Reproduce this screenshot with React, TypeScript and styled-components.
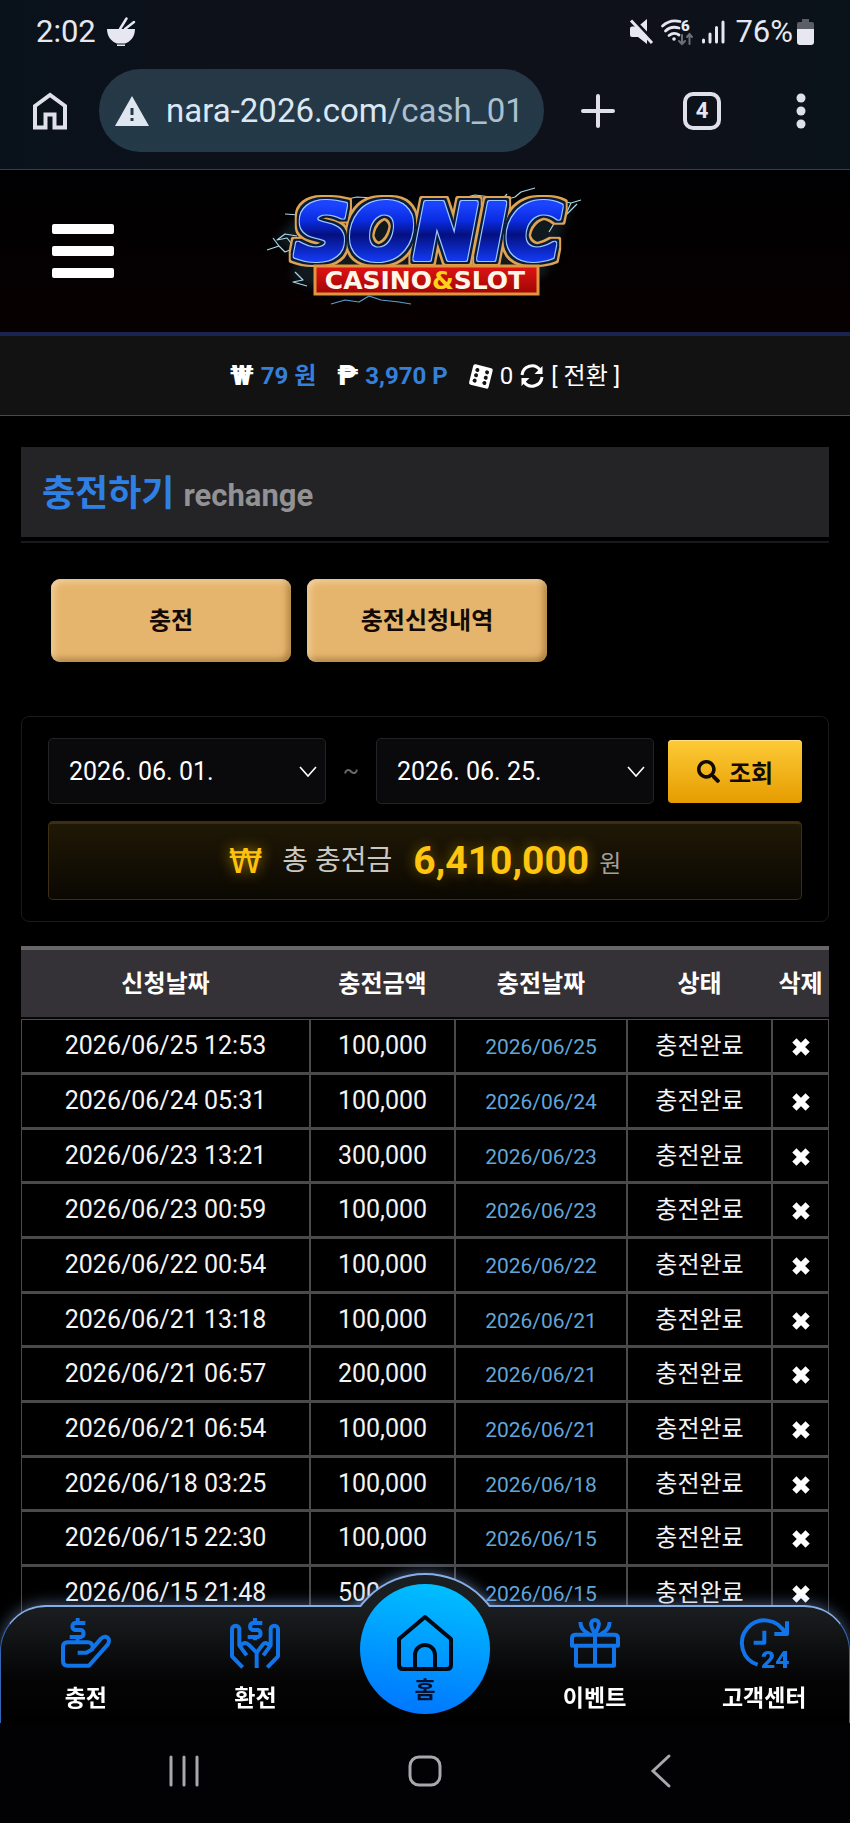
import React from 'react';
import styled, { createGlobalStyle } from 'styled-components';
import { FaSearch } from 'react-icons/fa';

const ROBOTO = `Roboto, "Noto Sans CJK KR", sans-serif`;

const GlobalStyle = createGlobalStyle`
  * { box-sizing: border-box; }
  body { margin: 0; background: #000; color: #fff; font-family: ${ROBOTO}; }
  button { border: 0; padding: 0; margin: 0; background: none; color: inherit; font: inherit; cursor: pointer; }
  a { color: inherit; text-decoration: none; }
  svg { display: block; flex: none; overflow: visible; }
`;

const Page = styled.div`
  padding-bottom: 202px;
`;

/* ---------- phone status bar and browser toolbar ---------- */

const Chrome = styled.div`
  background: linear-gradient(90deg, #09121a 0%, #0e111a 30%, #0e111a 80%, #0a131a 100%);
  border-bottom: 1px solid #3b3d42;
  color: #e6e7f0;
`;

const StatusBar = styled.div`
  display: flex;
  align-items: center;
  height: 64px;
  padding: 0 36px;
  font-size: 31px;
  line-height: 36px;
`;

const StatusGroup = styled.div`
  display: flex;
  align-items: center;
  gap: 10px;
`;

const StatusRight = styled(StatusGroup)`
  gap: 8px;
  margin-left: auto;
`;

const BatteryGroup = styled(StatusGroup)`
  gap: 4px;
  margin-left: 2px;
`;

const Toolbar = styled.div`
  display: flex;
  align-items: center;
  height: 105px;
  padding: 0 0 12px;
`;

const ToolButton = styled.button<{ $width: number }>`
  display: flex;
  align-items: center;
  justify-content: center;
  width: ${(p) => p.$width}px;
  height: 84px;
`;

const Address = styled.button`
  display: flex;
  align-items: center;
  gap: 17px;
  flex: 1;
  min-width: 0;
  height: 83px;
  padding: 0 16px;
  border-radius: 42px;
  background: linear-gradient(#273746, #233a48);
  color: #dbe7f3;
  font-size: 33px;
  line-height: 40px;
  white-space: nowrap;
  overflow: hidden;
`;

const AddressPath = styled.span`
  color: #adc0d0;
`;

const TabCount = styled.span`
  display: flex;
  align-items: center;
  justify-content: center;
  width: 38px;
  height: 38px;
  border: 4px solid #dfe0ea;
  border-radius: 10px;
  font-size: 22px;
  font-weight: 700;
  line-height: 24px;
`;

/* ---------- site header ---------- */

const SiteHeader = styled.header`
  display: grid;
  grid-template-columns: 1fr auto 1fr;
  align-items: center;
  height: 166px;
  padding: 0 52px;
  background: linear-gradient(#000002, #080001);
  border-bottom: 4px solid #1b2350;
`;

const MenuButton = styled.button`
  display: grid;
  gap: 12px;
  width: 62px;
`;

const MenuBar = styled.span`
  height: 10px;
  border-radius: 2px;
  background: #fff;
`;

const LogoLink = styled.a`
  display: block;
`;

const Wallet = styled.div`
  display: flex;
  align-items: center;
  justify-content: center;
  height: 80px;
  background: #121213;
  border-bottom: 1px solid #4a4a4c;
  font-size: 24px;
  line-height: 32px;
`;

const WalletItem = styled.div`
  display: flex;
  align-items: center;
  gap: 7px;
  & + & { margin-left: 21px; }
`;

const Sign = styled.span`
  font-size: 28px;
  font-weight: 900;
`;

const Amount = styled.strong`
  color: #3580dc;
  font-weight: 700;
`;

/* ---------- page content ---------- */

const Main = styled.main`
  padding: 31px 21px 0;
`;

const TitleBar = styled.div`
  display: flex;
  align-items: baseline;
  gap: 9px;
  height: 90px;
  padding: 22px 21px 0;
  background: #242326;
`;

const Title = styled.h1`
  margin: 0;
  color: #2f80e4;
  font-size: 36px;
  font-weight: 700;
  line-height: 50px;
`;

const Subtitle = styled.span`
  color: #929193;
  font-size: 31px;
  font-weight: 700;
  line-height: 40px;
`;

const Rule = styled.hr`
  margin: 4px 0 0;
  border: 0;
  border-top: 2px solid #19191b;
`;

const Tabs = styled.div`
  display: flex;
  gap: 16px;
  padding: 36px 30px 0;
`;

const TabButton = styled.button`
  width: 240px;
  height: 83px;
  border-radius: 9px;
  background: #e6b56d;
  box-shadow: inset 3px 3px 6px rgba(255, 240, 210, 0.5), inset -3px -3px 6px rgba(110, 70, 10, 0.5);
  color: #140a04;
  font-size: 24px;
  font-weight: 700;
  line-height: 32px;
`;

const Panel = styled.section`
  margin-top: 54px;
  padding: 21px 26px;
  border: 1px solid #1a1a1c;
  border-radius: 8px;
`;

const Filter = styled.form`
  display: flex;
  align-items: center;
`;

const DateField = styled.label`
  position: relative;
  flex: 1;
  min-width: 0;
`;

const DateSelect = styled.select`
  display: block;
  width: 100%;
  height: 66px;
  padding: 0 48px 0 20px;
  appearance: none;
  border: 1px solid #232326;
  border-radius: 5px;
  background: #0a090c;
  color: #fff;
  font-family: ${ROBOTO};
  font-size: 25px;
`;

const Chevron = styled.svg`
  position: absolute;
  top: 28px;
  right: 9px;
  pointer-events: none;
`;

const Tilde = styled.span`
  width: 50px;
  color: #6a6a6c;
  font-size: 24px;
  text-align: center;
`;

const SearchButton = styled.button`
  display: flex;
  align-items: center;
  justify-content: center;
  gap: 9px;
  width: 134px;
  height: 63px;
  margin-left: 14px;
  border-radius: 4px;
  background: linear-gradient(#fdcb38, #e69c00);
  box-shadow: inset 0 1px 0 #ffe07a;
  color: #120b02;
  font-size: 24px;
  font-weight: 700;
`;

const Total = styled.div`
  display: flex;
  align-items: center;
  justify-content: center;
  height: 79px;
  margin-top: 17px;
  padding-bottom: 2px;
  border: 1px solid #3e2f10;
  border-top: 3px solid #3c2e10;
  border-radius: 5px;
  background: linear-gradient(#1f1806, #0b0802);
  color: #c9c7c3;
  font-size: 28px;
  line-height: 40px;
`;

const TotalSign = styled.span`
  margin-right: 20px;
  color: #ffc20a;
  font-family: "DejaVu Sans", sans-serif;
  font-size: 34px;
  text-shadow: 0 0 14px rgba(255, 190, 0, 0.6);
`;

const TotalValue = styled.strong`
  margin: 0 10px 0 21px;
  color: #ffc50f;
  font-size: 39px;
  font-weight: 700;
  text-shadow: 0 0 14px rgba(255, 190, 0, 0.4);
`;

const TotalUnit = styled.span`
  padding-top: 6px;
  color: #a3a09a;
  font-size: 24px;
`;

const History = styled.table`
  width: 100%;
  margin-top: 24px;
  table-layout: fixed;
  border-collapse: separate;
  border-spacing: 0;
  text-align: center;
`;

/* shares are parts of the 808 that the five columns add up to */
const Col = styled.col<{ $share: number }>`
  width: ${(p) => (p.$share / 808) * 100}%;
`;

const HeadCell = styled.th`
  height: 73px;
  padding: 0 0 4px;
  border-top: 4px solid #676769;
  border-bottom: 2px solid #060607;
  background: #343236;
  font-size: 24px;
  font-weight: 700;
  white-space: nowrap;
`;

const Row = styled.tr`
  height: 55px;
  &:nth-child(3n) { height: 54px; }
`;

const Cell = styled.td<{ $size?: number; $color?: string }>`
  padding: 0;
  border: 1px solid #4a4a4d;
  border-bottom-width: 2px;
  color: ${(p) => p.$color ?? '#f4f4f5'};
  font-size: ${(p) => p.$size ?? 25}px;
  line-height: 32px;
  white-space: nowrap;
`;

const LowCell = styled(Cell)`
  padding-top: 2px;
`;

const DeleteButton = styled.button`
  display: block;
  margin: 0 auto;
`;

/* ---------- dock over the page ---------- */

const Dock = styled.div`
  position: fixed;
  left: 0;
  right: 0;
  bottom: 0;
`;

const SiteNav = styled.nav`
  position: relative;
  display: grid;
  grid-template-columns: repeat(5, 1fr);
  height: 118px;
  border: 1px solid #3466b8;
  border-top: 2px solid #88aee8;
  border-bottom: 0;
  border-radius: 46px 46px 0 0;
  background: linear-gradient(#1b1e21, #050506 60%, #000);
  box-shadow: 0 -2px 14px rgba(130, 165, 220, 0.45);
`;

const Bump = styled.span`
  position: absolute;
  left: 50%;
  top: -34px;
  width: 164px;
  height: 164px;
  margin-left: -82px;
  border: 2px solid #88aee8;
  border-radius: 50%;
  background: #1b1e21;
  box-shadow: 0 0 14px rgba(130, 165, 220, 0.6);
  clip-path: inset(-20px -20px 130px -20px);
`;

const NavItem = styled.a`
  display: flex;
  flex-direction: column;
  align-items: center;
  gap: 14px;
  padding-top: 11px;
  font-size: 23px;
  font-weight: 700;
  line-height: 34px;
  white-space: nowrap;
`;

const HomeItem = styled.a`
  position: absolute;
  left: 50%;
  top: -23px;
  display: flex;
  flex-direction: column;
  align-items: center;
  width: 130px;
  height: 130px;
  margin-left: -65px;
  padding-top: 30px;
  border-radius: 50%;
  background: linear-gradient(10deg, #0072ff, #00c4ff);
  color: #001233;
  font-size: 23px;
  font-weight: 700;
  line-height: 38px;
`;

const SystemBar = styled.div`
  position: relative;
  display: flex;
  align-items: center;
  justify-content: space-between;
  height: 100px;
  padding: 0 179px 4px 169px;
  background: #020104;
`;

/* ---------- drawings ---------- */

const Bowl = () => (
  <svg width="30" height="30" viewBox="0 0 30 30" fill="#e6e7f0">
    <path d="M1 12H29C29 20 24 25 19 26.500H11C6 25 1 20 1 12Z" />
    <path d="M11 27.500H19V29H11Z" />
    <path d="M14 12L20.500 1.500M19 12L28 5" stroke="#e6e7f0" strokeWidth="2.500" strokeLinecap="round" />
  </svg>
);

const Muted = () => (
  <svg width="24" height="26" viewBox="0 0 24 26" fill="#e6e7f0">
    <path d="M3 7.500H9L18 0V25L9 18H3Q1 18 1 16V9.500Q1 7.500 3 7.500Z" />
    <path d="M3 -1L25 22" stroke="#0e111a" strokeWidth="3" />
    <path d="M2 1.500L23 24" stroke="#e6e7f0" strokeWidth="3" />
  </svg>
);

const Wifi = () => (
  <svg width="32" height="26" viewBox="0 0 32 26" fill="none" stroke="#e6e7f0" strokeWidth="2.800" strokeLinecap="round">
    <path d="M1.500 7Q9 0 19 2.500M4.500 12Q10 6.500 18 9M8 16.500Q13 12.500 18 16" />
    <circle cx="13" cy="20" r="1.800" fill="#e6e7f0" stroke="none" />
    <text x="20" y="12" fontSize="15" fontWeight="900" fontFamily="Roboto, sans-serif" fill="#e6e7f0" stroke="none">6</text>
    <path d="M21 16V25M18 22L21 25L24 22M28.500 25V15M26 18L28.500 15L31 18" stroke="#6d6f77" strokeWidth="2" />
  </svg>
);

const Signal = () => (
  <svg width="24" height="26" viewBox="0 0 24 26" stroke="#e6e7f0" strokeWidth="3" strokeLinecap="round">
    <path d="M2.500 21V23M9 15V23M15.500 8.500V23M22 3V23" />
  </svg>
);

const Battery = () => (
  <svg width="17" height="26" viewBox="0 0 17 26">
    <path d="M5 0H12V3H15Q17 3 17 5V11H0V5Q0 3 2 3H5Z" fill="#5c5e66" />
    <path d="M0 10H17V23Q17 26 14 26H3Q0 26 0 23Z" fill="#e6e7f0" />
  </svg>
);

const BrowserHome = () => (
  <svg width="34" height="38" viewBox="0 0 34 38" fill="none" stroke="#dfe0ea" strokeWidth="4">
    <path d="M2 14L17 3L32 14V35.500H21.500V22.500H12.500V35.500H2Z" />
  </svg>
);

const Warning = () => (
  <svg width="34" height="30" viewBox="0 0 34 30">
    <path d="M17 0L34 30H0Z" fill="#dfe6ef" />
    <path d="M17 12V19M17 22V25" stroke="#263947" strokeWidth="3" />
  </svg>
);

const Plus = () => (
  <svg width="34" height="34" viewBox="0 0 34 34" stroke="#dfe0ea" strokeWidth="4" strokeLinecap="round">
    <path d="M2 17H32M17 2V32" />
  </svg>
);

const Dots = () => (
  <svg width="10" height="36" viewBox="0 0 10 36" fill="#dfe0ea">
    <circle cx="5" cy="5" r="4.500" /><circle cx="5" cy="18" r="4.500" /><circle cx="5" cy="31" r="4.500" />
  </svg>
);

const Logo = () => (
  <svg width="320" height="126" viewBox="0 0 320 126" role="img" aria-label="Sonic Casino & Slot">
    <defs>
      <linearGradient id="word" gradientUnits="userSpaceOnUse" x1="0" y1="16" x2="0" y2="72">
        <stop offset="0" stopColor="#1c44ff" /><stop offset=".3" stopColor="#0a2be0" />
        <stop offset=".55" stopColor="#041080" /><stop offset="1" stopColor="#1238f0" />
      </linearGradient>
      <linearGradient id="plate" x1="0" y1="0" x2="0" y2="1">
        <stop offset="0" stopColor="#e01414" /><stop offset="1" stopColor="#a00505" />
      </linearGradient>
      <filter id="glow" x="-20%" y="-20%" width="140%" height="140%"><feGaussianBlur stdDeviation="4" /></filter>
      {/* three rims around the word: pale blue, navy, gold */}
      <filter id="rims" x="-10%" y="-20%" width="120%" height="140%" colorInterpolationFilters="sRGB">
        <feMorphology in="SourceAlpha" operator="dilate" radius="5" result="far" />
        <feFlood floodColor="#e0a352" /><feComposite in2="far" operator="in" result="gold" />
        <feMorphology in="SourceAlpha" operator="dilate" radius="3" result="mid" />
        <feFlood floodColor="#0a1c3c" /><feComposite in2="mid" operator="in" result="navy" />
        <feMorphology in="SourceAlpha" operator="dilate" radius="1" result="near" />
        <feFlood floodColor="#9cc8ff" /><feComposite in2="near" operator="in" result="pale" />
        <feMerge>
          <feMergeNode in="gold" /><feMergeNode in="navy" /><feMergeNode in="pale" /><feMergeNode in="SourceGraphic" />
        </feMerge>
      </filter>
    </defs>
    <path d="M28 32L10 52L30 68L26 92L80 108L200 104L280 88L296 46L308 16L240 20L100 14Z" fill="#2a4a55" opacity=".35" filter="url(#glow)" />
    <g fill="none" stroke="#a8d8e6" strokeWidth="1.200" strokeLinejoin="round">
      <path d="M2 62L14 58L20 64L30 60L22 50L12 52L20 46L32 48M14 58L8 50M20 26L34 27L42 22" />
      <path d="M78 12L92 9L108 10L118 13M190 12L210 7L226 9L236 13L250 9L256 4L270 0M236 13L242 6" />
      <path d="M272 16L290 12L306 15L316 12M306 15L300 28L290 34L284 44M300 28L312 16" />
      <path d="M30 84L38 92L28 94L42 98" />
      <path d="M66 116L80 112L94 114L104 108L116 112L134 114L146 116" stroke="#5f9fc8" />
    </g>
    <text
      x="163" y="71" textAnchor="middle" fontFamily='"DejaVu Sans", sans-serif' fontSize="76" fontWeight="700" fontStyle="oblique"
      fill="url(#word)" stroke="url(#word)" strokeWidth="4" strokeLinejoin="round" filter="url(#rims)"
    >
      SONIC
    </text>
    <rect x="50" y="78" width="223" height="28" fill="url(#plate)" stroke="#e0953f" strokeWidth="3" />
    <text x="160" y="101" textAnchor="middle" fontFamily='"DejaVu Sans", sans-serif' fontSize="25" fontWeight="700" fill="#fff6ea">
      CASINO<tspan fill="#ffd21c">&amp;</tspan>SLOT
    </text>
  </svg>
);

const Dice = () => (
  <svg width="24" height="24" viewBox="0 0 24 24">
    <g transform="rotate(14 12 12)">
      <rect x="2" y="2" width="20" height="21" rx="2" fill="#fff" />
      <g fill="#121213">
        <circle cx="7" cy="7" r="2" /><circle cx="7" cy="12.500" r="2" /><circle cx="7" cy="18" r="2" />
        <circle cx="17" cy="7" r="2" /><circle cx="17" cy="12.500" r="2" /><circle cx="17" cy="18" r="2" />
      </g>
    </g>
  </svg>
);

const Refresh = () => (
  <svg width="24" height="24" viewBox="0 0 24 24" fill="none" stroke="#fff" strokeWidth="3">
    <path d="M2 11A10 10 0 0 1 20 6M22 13A10 10 0 0 1 4 18" />
    <path d="M22.500 2V10H14.500ZM1.500 22V14H9.500Z" fill="#fff" stroke="none" />
  </svg>
);

const Cross = () => (
  <svg width="18" height="18" viewBox="0 0 18 18" stroke="#fff" strokeWidth="6" strokeLinecap="square">
    <path d="M4.500 4.500L13.500 13.500M13.500 4.500L4.500 13.500" />
  </svg>
);

const NavIcon = ({ children }: { children: React.ReactNode }) => (
  <svg width="50" height="50" viewBox="0 0 150 150" fill="none" stroke="#1174e8" strokeWidth="12" strokeLinejoin="round">
    {children}
  </svg>
);

const DepositIcon = () => (
  <NavIcon>
    <path d="M73 15H42A11 11 0 0 0 42 36H60A11 11 0 0 1 60 57H26M50 0V15M50 57V73" />
    <path d="M50 104H76L94 94Q98 73 80 73H20Q6 73 6 87V129Q6 143 20 143H84L140 80Q148 66 140 59Q130 52 120 62L92 94" />
  </NavIcon>
);

const WithdrawIcon = () => (
  <NavIcon>
    <path d="M97 15H68A11 11 0 0 0 68 36H84A11 11 0 0 1 84 57H53M75 0V15M75 57V67" />
    <path d="M38 148L6 115V34A11 11 0 0 1 28 34V82L50 112M32 84Q42 68 56 80L80 104V150" />
    <path d="M112 148L144 115V34A11 11 0 0 0 122 34V82L100 112M118 84Q108 68 98 80L80 104" />
  </NavIcon>
);

const GiftIcon = () => (
  <NavIcon>
    <path d="M6 83V60Q6 50 18 50H132Q144 50 144 60V83ZM18 83V143H132V83M75 45V143" />
    <path d="M75 48Q58 20 66 10Q75 2 84 10Q92 20 75 48M31 12Q32 38 58 48M119 12Q118 38 92 48" />
  </NavIcon>
);

const SupportIcon = () => (
  <NavIcon>
    <path d="M56 140A68 68 0 1 1 138 46M144 10V48H106M76 38V74H44" />
    <path d="M144 48L128 30" />
    <text x="66" y="149" fontFamily="Roboto, sans-serif" fontSize="74" fontWeight="900" fill="#1174e8" stroke="none">24</text>
  </NavIcon>
);

const HouseIcon = () => (
  <svg width="58" height="58" viewBox="0 0 58 58" fill="none" stroke="#020914" strokeWidth="4" strokeLinejoin="round">
    <path d="M3 25L29 3L55 25V51Q55 55 51 55H7Q3 55 3 51ZM19 55V41A10 10 0 0 1 39 41V55" />
  </svg>
);

/* ---------- data ---------- */

const HISTORY: [string, string, string][] = [
  ['2026/06/25 12:53', '100,000', '2026/06/25'],
  ['2026/06/24 05:31', '100,000', '2026/06/24'],
  ['2026/06/23 13:21', '300,000', '2026/06/23'],
  ['2026/06/23 00:59', '100,000', '2026/06/23'],
  ['2026/06/22 00:54', '100,000', '2026/06/22'],
  ['2026/06/21 13:18', '100,000', '2026/06/21'],
  ['2026/06/21 06:57', '200,000', '2026/06/21'],
  ['2026/06/21 06:54', '100,000', '2026/06/21'],
  ['2026/06/18 03:25', '100,000', '2026/06/18'],
  ['2026/06/15 22:30', '100,000', '2026/06/15'],
  ['2026/06/15 21:48', '500,000', '2026/06/15'],
];

const DatePick = ({ label, value }: { label: string; value: string }) => (
  <DateField>
    <DateSelect aria-label={label} defaultValue={value}>
      <option>{value}</option>
    </DateSelect>
    <Chevron width="18" height="12" viewBox="0 0 18 12" fill="none" stroke="#fff" strokeWidth="1.600">
      <path d="M1 1L9 10L17 1" />
    </Chevron>
  </DateField>
);

export default function App() {
  return (
    <>
      <GlobalStyle />
      <Page>
        <Chrome>
          <StatusBar>
            <StatusGroup>2:02 <Bowl /></StatusGroup>
            <StatusRight>
              <Muted />
              <Wifi />
              <Signal />
              <BatteryGroup>76%<Battery /></BatteryGroup>
            </StatusRight>
          </StatusBar>
          <Toolbar>
            <ToolButton $width={99} aria-label="Home"><BrowserHome /></ToolButton>
            <Address>
              <Warning />
              <span>nara-2026.com<AddressPath>/cash_01</AddressPath></span>
            </Address>
            <ToolButton $width={108} aria-label="New tab"><Plus /></ToolButton>
            <ToolButton $width={100} aria-label="Tabs"><TabCount>4</TabCount></ToolButton>
            <ToolButton $width={98} aria-label="More"><Dots /></ToolButton>
          </Toolbar>
        </Chrome>

        <SiteHeader>
          <MenuButton aria-label="Menu"><MenuBar /><MenuBar /><MenuBar /></MenuButton>
          <LogoLink href="#"><Logo /></LogoLink>
        </SiteHeader>

        <Wallet>
          <WalletItem><Sign>₩</Sign><Amount>79 원</Amount></WalletItem>
          <WalletItem><Sign>₱</Sign><Amount>3,970 P</Amount></WalletItem>
          <WalletItem>
            <Dice /><span>0</span><Refresh /><button type="button">[ 전환 ]</button>
          </WalletItem>
        </Wallet>

        <Main>
          <TitleBar>
            <Title>충전하기</Title>
            <Subtitle>rechange</Subtitle>
          </TitleBar>
          <Rule />
          <Tabs>
            <TabButton>충전</TabButton>
            <TabButton>충전신청내역</TabButton>
          </Tabs>

          <Panel>
            <Filter>
              <DatePick label="시작일" value="2026. 06. 01." />
              <Tilde>~</Tilde>
              <DatePick label="종료일" value="2026. 06. 25." />
              <SearchButton type="button"><FaSearch size={23} />조회</SearchButton>
            </Filter>
            <Total>
              <TotalSign>₩</TotalSign>
              총 충전금
              <TotalValue>6,410,000</TotalValue>
              <TotalUnit>원</TotalUnit>
            </Total>
          </Panel>

          <History>
            <colgroup>
              <Col $share={289} /><Col $share={145} /><Col $share={172} /><Col $share={145} /><Col $share={57} />
            </colgroup>
            <thead>
              <tr>
                {['신청날짜', '충전금액', '충전날짜', '상태', '삭제'].map((h) => <HeadCell key={h} scope="col">{h}</HeadCell>)}
              </tr>
            </thead>
            <tbody>
              {HISTORY.map(([requested, amount, charged]) => (
                <Row key={requested}>
                  <Cell>{requested}</Cell>
                  <Cell>{amount}</Cell>
                  <LowCell $size={21} $color="#62a5da">{charged}</LowCell>
                  <Cell $size={24}>충전완료</Cell>
                  <LowCell><DeleteButton aria-label="삭제"><Cross /></DeleteButton></LowCell>
                </Row>
              ))}
            </tbody>
          </History>
        </Main>
      </Page>

      <Dock>
        <SiteNav>
          <Bump />
          <NavItem href="#"><DepositIcon />충전</NavItem>
          <NavItem href="#"><WithdrawIcon />환전</NavItem>
          <span />
          <NavItem href="#"><GiftIcon />이벤트</NavItem>
          <NavItem href="#"><SupportIcon />고객센터</NavItem>
          <HomeItem href="#"><HouseIcon />홈</HomeItem>
        </SiteNav>
        <SystemBar>
          <button aria-label="Recent apps">
            <svg width="30" height="32" viewBox="0 0 30 32" stroke="#a9a8ac" strokeWidth="3" strokeLinecap="round">
              <path d="M2 2V30M15 2V30M28 2V30" />
            </svg>
          </button>
          <button aria-label="Home screen">
            <svg width="34" height="32" viewBox="0 0 34 32" fill="none" stroke="#a9a8ac" strokeWidth="3">
              <rect x="2" y="2" width="30" height="28" rx="9" />
            </svg>
          </button>
          <button aria-label="Back">
            <svg width="20" height="34" viewBox="0 0 20 34" fill="none" stroke="#a9a8ac" strokeWidth="3" strokeLinecap="round">
              <path d="M18 2L2 17L18 32" />
            </svg>
          </button>
        </SystemBar>
      </Dock>
    </>
  );
}
